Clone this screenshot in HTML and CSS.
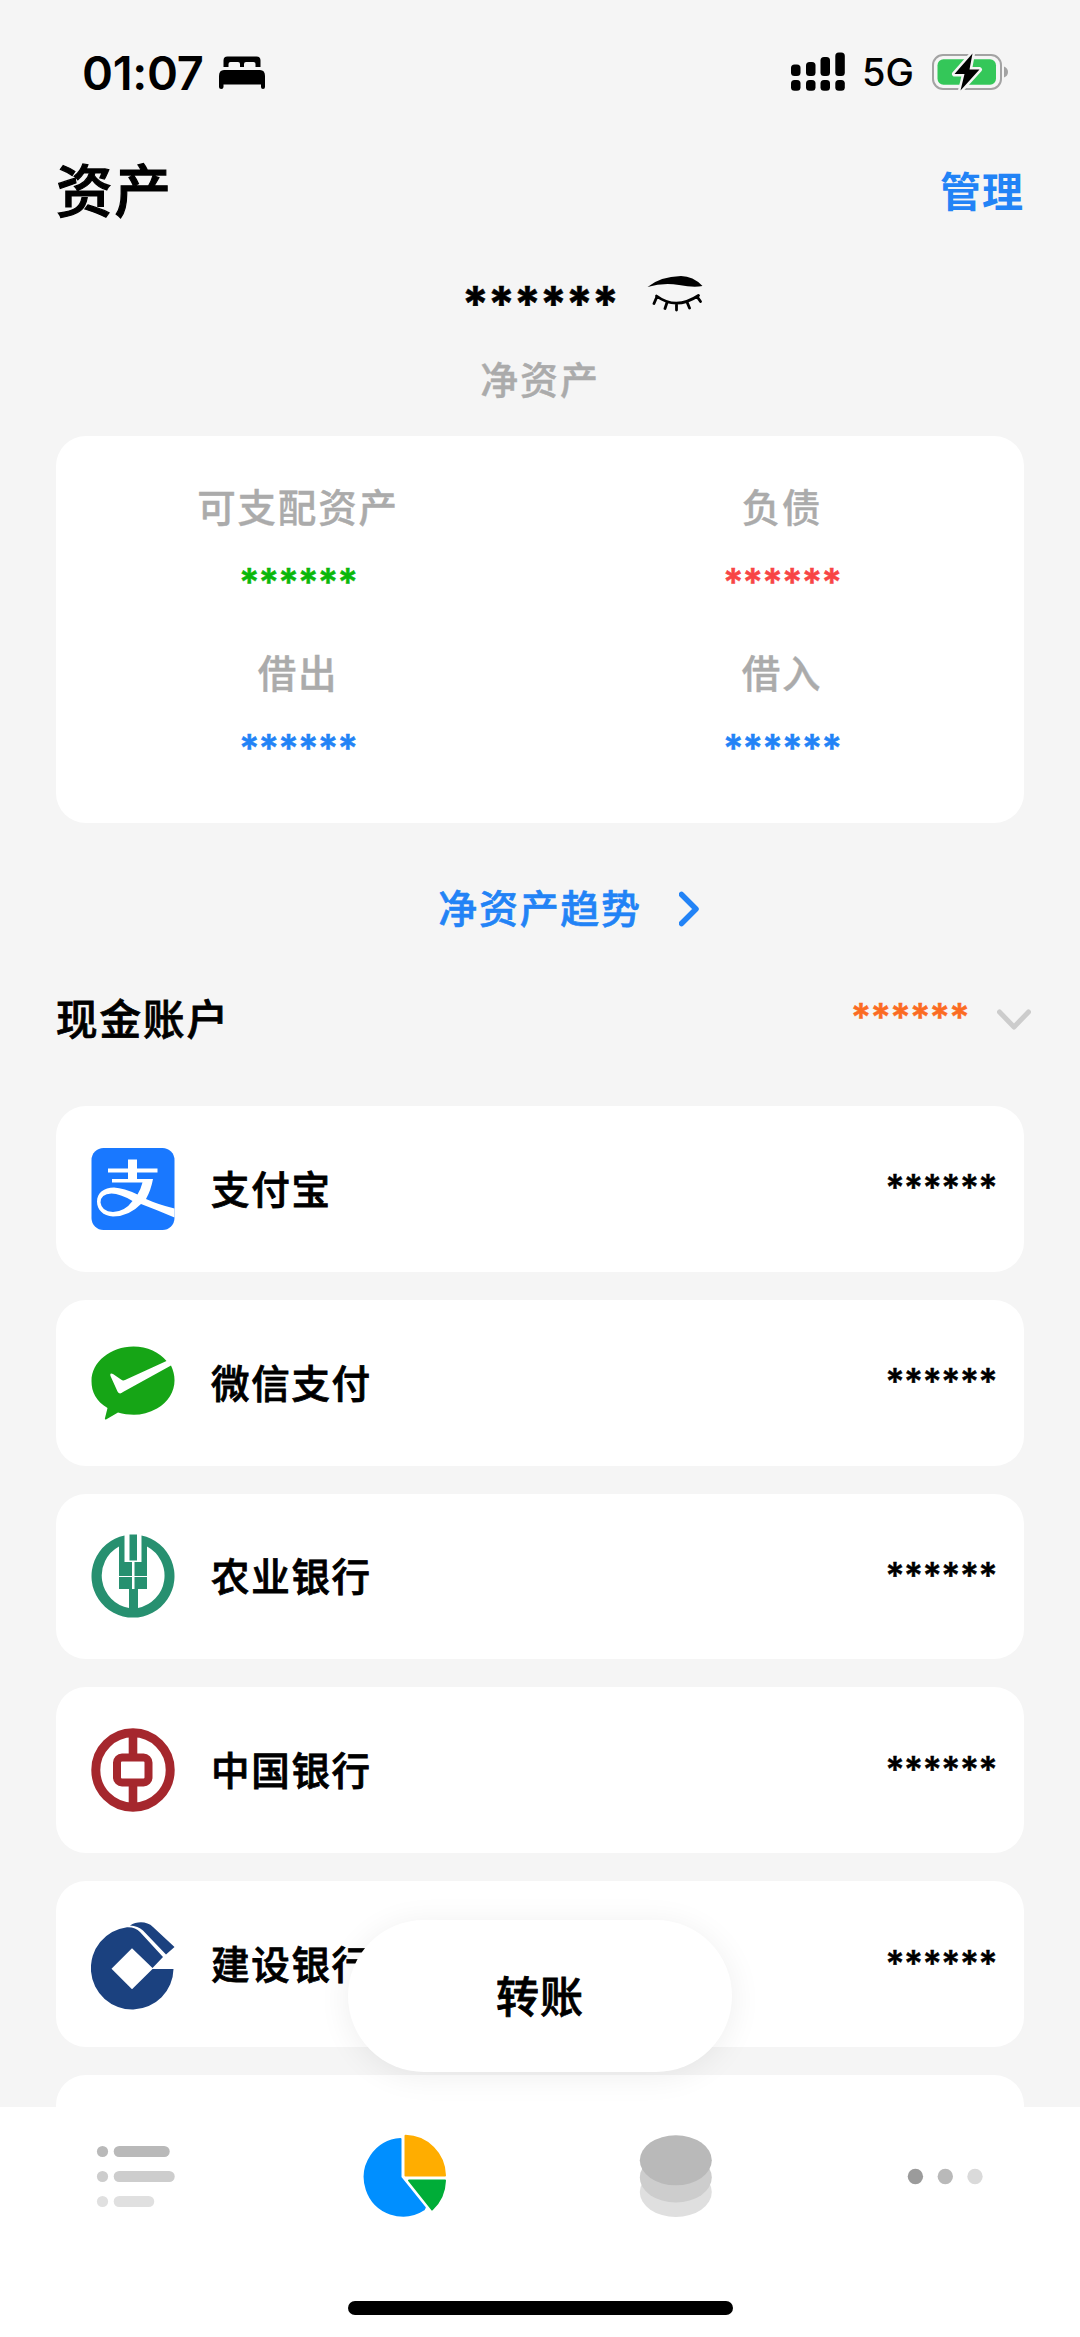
FILE: index.html
```html
<!DOCTYPE html>
<html lang="zh-CN">
<head>
<meta charset="utf-8">
<title>资产</title>
<link rel="stylesheet" href="styles.css">
</head>
<body>
<div class="screen">
  <header class="status">
    <span class="clock">01:07</span>
    <svg class="bed" viewBox="0 0 46 34" width="46" height="34"><path d="M4.500 11V4.500Q4.500 0.500 8.500 0.500H37.500Q41.500 0.500 41.500 4.500V11H36.500V8Q36.500 6 34.500 6H27Q25 6 25 8V11H21V8Q21 6 19 6H11.500Q9.500 6 9.500 8V11Z"/><path d="M0 20Q0 14 5 14H41Q46 14 46 20V31Q46 33 44 33Q42 33 42 31V28.500H4.500V31Q4.500 33 2.300 33Q0 33 0 31Z"/></svg>
    <svg class="signal" viewBox="0 0 54 40" width="54" height="40"><rect x="0" y="12.500" width="9.500" height="11.500" rx="3.500"/><rect x="15" y="10" width="9.500" height="14" rx="3.500"/><rect x="29.500" y="5" width="9.500" height="19" rx="3.500"/><rect x="44.300" y="0.500" width="9.500" height="23.500" rx="3.500"/><rect x="0" y="28" width="9.500" height="10.700" rx="3.500"/><rect x="15" y="28" width="9.500" height="10.700" rx="3.500"/><rect x="29.500" y="28" width="9.500" height="10.700" rx="3.500"/><rect x="44.300" y="28" width="9.500" height="10.700" rx="3.500"/></svg>
    <span class="network">5G</span>
    <svg class="battery" viewBox="0 0 78 40" width="78" height="40"><rect x="1" y="3" width="68" height="34" rx="10" fill="none" stroke="#a3a3a3" stroke-width="2"/><path d="M72 14.500Q76 16 76 20T72 25.500Z" fill="#a3a3a3"/><rect x="5.500" y="7.200" width="58.500" height="25.600" rx="6" fill="#34c759"/><path d="M40.500 1.500L22.500 22H32.500L28.500 38.500L47.500 17.500H37.500Z" fill="#000" stroke="#f5f5f5" stroke-width="5" stroke-linejoin="round" paint-order="stroke"/></svg>
  </header>

  <main class="content">
    <div class="titlebar">
      <h1 class="title">资产</h1>
      <a class="manage">管理</a>
    </div>

    <div class="balance">
      <span class="balance-value">******</span>
      <svg class="eye" viewBox="0 0 56 36" width="56" height="36"><path d="M0.500 11Q13 0.500 34 0Q46 0 55.500 10Q47 12 32 9Q16 6.500 0.500 11Z"/><path d="M9.500 20Q29 34.500 51.500 19.500M10 20.500L7 27.500M20 26.500L18 32.500M29.500 27.500V34M40 26L42.500 32M50 20.500L53.500 25.500" fill="none" stroke="#000" stroke-width="2.800" stroke-linecap="round"/></svg>
    </div>
    <div class="balance-label">净资产</div>

    <section class="summary">
      <div class="metric"><span class="metric-label">可支配资产</span><span class="metric-value green">******</span></div>
      <div class="metric"><span class="metric-label">负债</span><span class="metric-value red">******</span></div>
      <div class="metric"><span class="metric-label">借出</span><span class="metric-value blue">******</span></div>
      <div class="metric"><span class="metric-label">借入</span><span class="metric-value blue">******</span></div>
    </section>

    <a class="trend">
      <span class="trend-text">净资产趋势</span>
      <svg class="trend-arrow" viewBox="0 0 20 36" width="20" height="36"><path d="M2.500 3.500L17 18L2.500 32.500" fill="none" stroke="#2283f6" stroke-width="5.500" stroke-linecap="round" stroke-linejoin="round"/></svg>
    </a>

    <div class="group">
      <h2 class="group-name">现金账户</h2>
      <span class="group-total">******</span>
      <svg class="group-arrow" viewBox="0 0 34 22" width="34" height="22"><path d="M2.500 3L17 18L31.500 3" fill="none" stroke="#ccc" stroke-width="5" stroke-linecap="round" stroke-linejoin="round"/></svg>
    </div>

    <ul class="accounts">
      <li class="account">
        <svg class="logo" viewBox="0 0 84 84" width="84" height="84"><rect x="0.500" y="1" width="83" height="82" rx="12" fill="#1978ff"/><path d="M37 12.500H46V21.500H66.500V25.500H46V32H62Q60 43 55 52Q67 57.500 83.500 61.500V70.500Q66 63 50 57Q38 69.500 22 69.500C12 69 6 62.500 6 54.500C6 46 13 40.500 23 40.500Q33 41 46.500 47.500Q49.500 43 51.500 35.500H21V32H37V25.500H17V21.500H37ZM41.500 54Q29 46.500 20.500 46.500Q9.500 47 9.500 55.500Q10.500 64.500 22 65Q34 64.500 41.500 54Z" fill="#fff" fill-rule="evenodd"/></svg>
        <span class="name">支付宝</span><span class="amount">******</span>
      </li>
      <li class="account">
        <svg class="logo" viewBox="0 0 84 84" width="84" height="84"><path d="M42.500 5.500C56 5.500 69 11.500 75.500 20L34 39Q32 40 30 38.500L22 33Q18.500 31.500 19.500 35L26.500 50.500Q28.500 54 32 51L80 24.500C88 41 82 58 66 67.500C53 75 40 75 27 71.500L15 78.500Q13.500 79 14 77L16.500 67C5 60 .5 51 .5 40C.5 21 19.500 5.500 42.500 5.500Z" fill="#16a516"/></svg>
        <span class="name">微信支付</span><span class="amount">******</span>
      </li>
      <li class="account">
        <svg class="logo" viewBox="0 0 84 84" width="84" height="84"><path d="M33.500 1.500A41.500 41.500 0 1 0 50.500 1.500V28H43.500V42H56V12.500A33 33 0 0 1 47 74V55H56V43H43.500V55H41V43H28V55H38V74A33 33 0 0 1 28 12.500V42H41V28H33.500Z" fill="#279070"/><path d="M38.500 0.500H46V26.500H38.500Z" fill="#279070"/></svg>
        <span class="name">农业银行</span><span class="amount">******</span>
      </li>
      <li class="account">
        <svg class="logo" viewBox="0 0 84 84" width="84" height="84"><g fill="none" stroke="#a5272d"><circle cx="42" cy="42" r="37.200" stroke-width="9"/><path d="M42 5V27M42 57V79" stroke-width="8.600"/><rect x="26" y="29.500" width="31.500" height="25" rx="5" stroke-width="8"/></g></svg>
        <span class="name">中国银行</span><span class="amount">******</span>
      </li>
      <li class="account">
        <svg class="logo logo-tall" viewBox="0 0 84 89" width="84" height="89"><path d="M36 5.200C42 5 46 7 49 10L72 35L61.500 46L41 26.200L20.500 46.700L41 67.200L61.500 46.900H82.500A41.300 41.300 0 1 1 36 5.200Z" fill="#1b417f"/><path d="M39 3.500C46 -1 56 -1 62 5L83.500 25L75 32.500L52 8.500Q47 4 39 3.500Z" fill="#1b417f"/></svg>
        <span class="name">建设银行</span><span class="amount">******</span>
      </li>
      <li class="account"></li>
    </ul>
    <button class="transfer">转账</button>
  </main>

  <nav class="tabs">
    <span class="tab"><svg viewBox="0 0 84 84" width="84" height="84"><g fill="#b9b9b9"><circle cx="9.500" cy="17.500" r="5.600"/><rect x="20.700" y="12" width="56" height="11" rx="5.500"/></g><g fill="#cdcdcd"><circle cx="9.500" cy="42.500" r="5.600"/><rect x="20.700" y="37" width="61" height="11" rx="5.500"/></g><g fill="#e0e0e0"><circle cx="9.500" cy="67.500" r="5.600"/><rect x="20.700" y="62" width="40.500" height="11" rx="5.500"/></g></svg></span>
    <span class="tab"><svg viewBox="0 0 84 84" width="84" height="84"><g stroke-width="2" stroke-linejoin="round"><path d="M37.500 5.100A38.300 38.300 0 1 0 60.800 75.500L61.800 73.600L37.500 43.500Z" fill="#008fff" stroke="#008fff"/><path d="M42.500 1.800A40.400 40.400 0 0 1 82 41.500H42.500Z" fill="#ffad00" stroke="#ffad00"/><path d="M46 46.500H82Q81.500 64 69 75.500Z" fill="#00ad38" stroke="#00ad38"/></g></svg></span>
    <span class="tab"><svg viewBox="0 0 84 84" width="84" height="84"><ellipse cx="42.800" cy="58" rx="36" ry="25" fill="#dfdfdf"/><ellipse cx="42.800" cy="43.500" rx="36" ry="25" fill="#cdcdcd"/><ellipse cx="42.800" cy="26.300" rx="36" ry="25" fill="#b9b9b9"/></svg></span>
    <span class="tab"><svg viewBox="0 0 84 84" width="84" height="84"><circle cx="12.400" cy="42.500" r="7.700" fill="#9b9b9b"/><circle cx="42.300" cy="42.500" r="7.700" fill="#b9b9b9"/><circle cx="72" cy="42.500" r="7.700" fill="#dadada"/></svg></span>
    <i class="home"></i>
  </nav>
</div>
</body>
</html>
```
FILE: styles.css
```css
* { box-sizing: border-box; }
body {
  margin: 0;
  background: #f5f5f5;
  color: #000;
  font-family: Inter, "Noto Sans CJK SC", sans-serif;
}
h1, h2, ul { margin: 0; padding: 0; }
svg { display: block; flex: none; }

.screen {
  display: flex;
  flex-direction: column;
  width: 1080px;
  height: 2337px;
  overflow: hidden;
}

/* status bar */
.status {
  display: flex;
  align-items: center;
  flex: none;
  height: 144px;
  padding: 0 70px 0 82px;
}
.clock { width: 137px; font-size: 47px; font-weight: 600; letter-spacing: -0.3px; }
.bed { margin-top: 1px; }
.signal { margin-left: auto; }
.network { width: 67px; padding-left: 17px; font-size: 38px; font-weight: 450; margin-right: 20px; }

/* title */
.content {
  position: relative;
  flex: 1;
  min-height: 0;
  overflow: hidden;
  padding: 0 56px;
}
.titlebar {
  display: flex;
  align-items: center;
  justify-content: space-between;
  height: 96px;
}
.title { font-size: 56.500px; font-weight: 500; letter-spacing: 2px; line-height: 96px; -webkit-text-stroke: 1.200px; }
.manage { font-size: 41px; font-weight: 700; letter-spacing: 1px; line-height: 60px; margin-bottom: 1px; color: #2283f6; }

/* net worth */
.balance {
  display: grid;
  grid-template-columns: 1fr auto 1fr;
  align-items: center;
  height: 107px;
}
.balance-value { grid-column: 2; font-size: 48px; font-weight: 700; letter-spacing: -0.8px; line-height: 60px; margin-top: 21px; -webkit-text-stroke: 0.600px; }
.eye { margin-left: 29px; }
.balance-label {
  height: 89px;
  line-height: 66px;
  text-align: center;
  font-size: 38px;
  font-weight: 500;
  letter-spacing: 1.800px;
  color: #ababab;
  -webkit-text-stroke: 0.400px;
}

.summary {
  display: grid;
  grid-template-columns: 1fr 1fr;
  grid-auto-rows: 166px;
  height: 387px;
  padding-top: 40px;
  border-radius: 30px;
  background: #fff;
}
.metric { display: flex; flex-direction: column; align-items: center; }
.metric-label { height: 62px; line-height: 64px; font-size: 38.500px; font-weight: 500; letter-spacing: 1.800px; color: #ababab; -webkit-text-stroke: 0.400px; }
.metric-value { height: 60px; line-height: 89px; font-size: 38px; font-weight: 600; letter-spacing: -0.8px; -webkit-text-stroke: 0.500px; }
.green { color: #0ab80a; }
.red { color: #f84545; }
.blue { color: #2283f6; }

.trend {
  display: grid;
  grid-template-columns: 1fr auto 1fr;
  align-items: center;
  height: 172px;
  color: #2283f6;
}
.trend-text { grid-column: 2; font-size: 39px; font-weight: 500; letter-spacing: 1.700px; line-height: 60px; margin-bottom: 1px; -webkit-text-stroke: 0.600px; }
.trend-arrow { margin-left: 37px; }

/* account list */
.group { display: flex; align-items: center; height: 50px; }
.group-name { flex: 1; font-size: 41.500px; font-weight: 500; letter-spacing: 2px; line-height: 50px; -webkit-text-stroke: 0.800px; }
.group-total { font-size: 38px; font-weight: 600; letter-spacing: -0.8px; line-height: 50px; margin-bottom: 6px; color: #fb6b22; -webkit-text-stroke: 0.500px; }
.group-arrow { margin: 0 -7px 0 28px; }

.accounts {
  display: flex;
  flex-direction: column;
  gap: 28px;
  padding-top: 61px;
  list-style: none;
}
.account {
  display: flex;
  align-items: center;
  flex: none;
  height: 165.800px;
  padding: 0 27px 0 35px;
  border-radius: 30px;
  background: #fff;
}
.logo-tall { margin-top: 5px; }
.name { flex: 1; margin: 0 0 4px 36px; font-size: 38.500px; font-weight: 500; letter-spacing: 1.700px; -webkit-text-stroke: 0.800px; }
.amount { margin-bottom: 3px; font-size: 36px; font-weight: 600; letter-spacing: -0.8px; -webkit-text-stroke: 0.400px; }

.transfer {
  position: absolute;
  left: 348px;
  bottom: 35px;
  width: 384px;
  height: 152px;
  padding: 0 0 4px;
  border: 0;
  border-radius: 76px;
  background: #fff;
  box-shadow: 0 4px 32px rgba(0, 0, 0, 0.07);
  font: 500 43px Inter, "Noto Sans CJK SC", sans-serif;
  letter-spacing: 1px;
  color: #000;
  -webkit-text-stroke: 0.800px;
}

/* tab bar */
.tabs {
  position: relative;
  display: grid;
  grid-template-columns: repeat(4, 1fr);
  flex: none;
  height: 230px;
  padding-top: 27px;
  background: #fff;
}
.tab { display: flex; justify-content: center; }
.home {
  position: absolute;
  left: 348px;
  bottom: 22px;
  width: 385px;
  height: 14px;
  border-radius: 7px;
  background: #000;
}
```
